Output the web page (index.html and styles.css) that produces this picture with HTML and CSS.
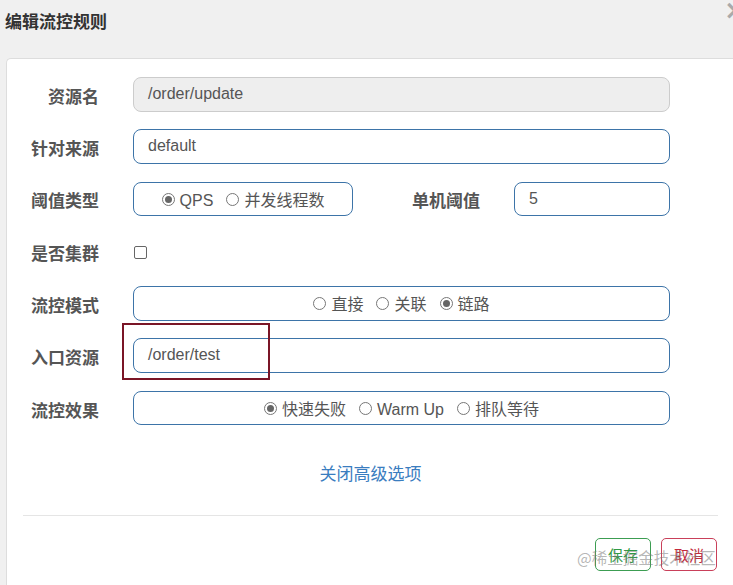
FILE: index.html
```html
<!DOCTYPE html>
<html lang="zh">
<head>
<meta charset="utf-8">
<title>编辑流控规则</title>
<link rel="stylesheet" href="styles.css">
</head>
<body>
<div class="header">
  <h4 class="title">编辑流控规则</h4>
  <span class="close">×</span>
</div>
<div class="panel">
  <div class="content">
    <div class="row">
      <label class="lbl">资源名</label>
      <div class="input disabled">/order/update</div>
    </div>
    <div class="row">
      <label class="lbl">针对来源</label>
      <div class="input">default</div>
    </div>
    <div class="row row-split">
      <label class="lbl">阈值类型</label>
      <div class="input radios">
        <span class="opt"><span class="radio on"></span>QPS</span>
        <span class="opt"><span class="radio"></span>并发线程数</span>
      </div>
      <label class="lbl">单机阈值</label>
      <div class="input">5</div>
    </div>
    <div class="row">
      <label class="lbl">是否集群</label>
      <div class="check-wrap"><span class="checkbox"></span></div>
    </div>
    <div class="row">
      <label class="lbl">流控模式</label>
      <div class="input radios">
        <span class="opt"><span class="radio"></span>直接</span>
        <span class="opt"><span class="radio"></span>关联</span>
        <span class="opt"><span class="radio on"></span>链路</span>
      </div>
    </div>
    <div class="row">
      <label class="lbl">入口资源</label>
      <div class="input">/order/test</div>
    </div>
    <div class="row">
      <label class="lbl">流控效果</label>
      <div class="input radios">
        <span class="opt"><span class="radio on"></span>快速失败</span>
        <span class="opt"><span class="radio"></span>Warm Up</span>
        <span class="opt"><span class="radio"></span>排队等待</span>
      </div>
    </div>
    <div class="more"><a class="more-link">关闭高级选项</a></div>
    <div class="divider"></div>
    <div class="actions">
      <button class="btn btn-save">保存</button>
      <button class="btn btn-cancel">取消</button>
    </div>
  </div>
</div>
<div class="highlight"></div>
<div class="watermark">@稀土掘金技术社区</div>
</body>
</html>
```
FILE: styles.css
```css
html, body {
  margin: 0;
  padding: 0;
}
body {
  background: #f0f0f0;
  font-family: "Liberation Sans", "Noto Sans CJK SC", sans-serif;
  color: #555;
  width: 733px;
  height: 585px;
  overflow: hidden;
  position: relative;
}
.header {
  height: 58px;
  position: relative;
}
.title {
  margin: 0;
  padding: 10px 0 0 5px;
  font-family: "Noto Sans CJK SC", sans-serif;
  font-size: 17px;
  line-height: 22px;
  font-weight: 700;
  color: #333;
}
.close {
  position: absolute;
  left: 724px;
  top: -3px;
  font-size: 26px;
  line-height: 26px;
  color: #aaa;
  font-weight: 700;
  font-family: "DejaVu Sans", sans-serif;
}
.panel {
  margin-left: 6px;
  background: #fff;
  border-top: 1px solid #ddd;
  border-left: 1px solid #ddd;
  border-top-left-radius: 5px;
  height: 526px;
}
.content {
  margin-left: 16px;
  width: 695px;
  padding-top: 18px;
}
.row {
  display: grid;
  grid-template-columns: 76px 537px;
  column-gap: 34px;
  height: 34.5px;
  margin-bottom: 17.8px;
  align-items: center;
}
.row-split {
  grid-template-columns: 76px 220px 93px 156px;
}
.lbl {
  text-align: right;
  font-family: "Noto Sans CJK SC", sans-serif;
  font-weight: 700;
  font-size: 17px;
  color: #555;
  white-space: nowrap;
  padding-top: 2px;
}
.input {
  box-sizing: border-box;
  height: 34.5px;
  border: 1px solid #3d74a8;
  border-radius: 8px;
  padding: 0 14px;
  font-size: 16px;
  line-height: 32px;
  color: #555;
  background: #fff;
  white-space: nowrap;
}
.input.disabled {
  background: #eee;
  border-color: #ccc;
}
.radios {
  display: flex;
  justify-content: center;
  align-items: center;
  gap: 13px;
  padding-top: 4px;
  font-family: "Liberation Sans", "Noto Sans CJK SC", sans-serif;
}
.opt {
  display: inline-flex;
  align-items: center;
  gap: 5px;
}
.radio {
  box-sizing: border-box;
  width: 13px;
  height: 13px;
  border: 1px solid #777;
  border-radius: 50%;
  background: #fff;
  position: relative;
  margin-top: -3px;
}
.radio.on::after {
  content: "";
  position: absolute;
  left: 2px;
  top: 2px;
  width: 7px;
  height: 7px;
  border-radius: 50%;
  background: #666;
}
.check-wrap {
  display: flex;
  align-items: center;
  padding-left: 1px;
  padding-top: 2px;
}
.checkbox {
  box-sizing: border-box;
  width: 13px;
  height: 13px;
  border: 1px solid #666;
  border-radius: 2px;
  background: #fff;
}
.more {
  margin-top: 36px;
  text-align: center;
  line-height: 24px;
}
.more-link {
  font-family: "Noto Sans CJK SC", sans-serif;
  font-size: 17px;
  color: #3a7dbf;
}
.divider {
  margin-top: 28px;
  height: 1px;
  background: #e5e5e5;
}
.actions {
  display: flex;
  justify-content: flex-end;
  gap: 10px;
  margin-top: 22px;
  padding-right: 1px;
}
.btn {
  box-sizing: border-box;
  width: 56px;
  height: 33px;
  background: #fff;
  border-radius: 5px;
  font-family: "Noto Sans CJK SC", sans-serif;
  font-size: 15px;
  padding: 0;
  line-height: 31px;
}
.btn-save {
  border: 1px solid #3c9d52;
  color: #2f9a45;
}
.btn-cancel {
  border: 1px solid #c9405a;
  color: #c42a3c;
}
.highlight {
  position: absolute;
  left: 122px;
  top: 323px;
  width: 144px;
  height: 53px;
  border: 2px solid #7a1526;
}
.watermark {
  position: absolute;
  left: 577px;
  top: 546px;
  font-family: "Noto Sans CJK SC", sans-serif;
  font-size: 15.5px;
  line-height: 22px;
  color: rgba(120, 120, 120, 0.55);
  white-space: nowrap;
}
```
